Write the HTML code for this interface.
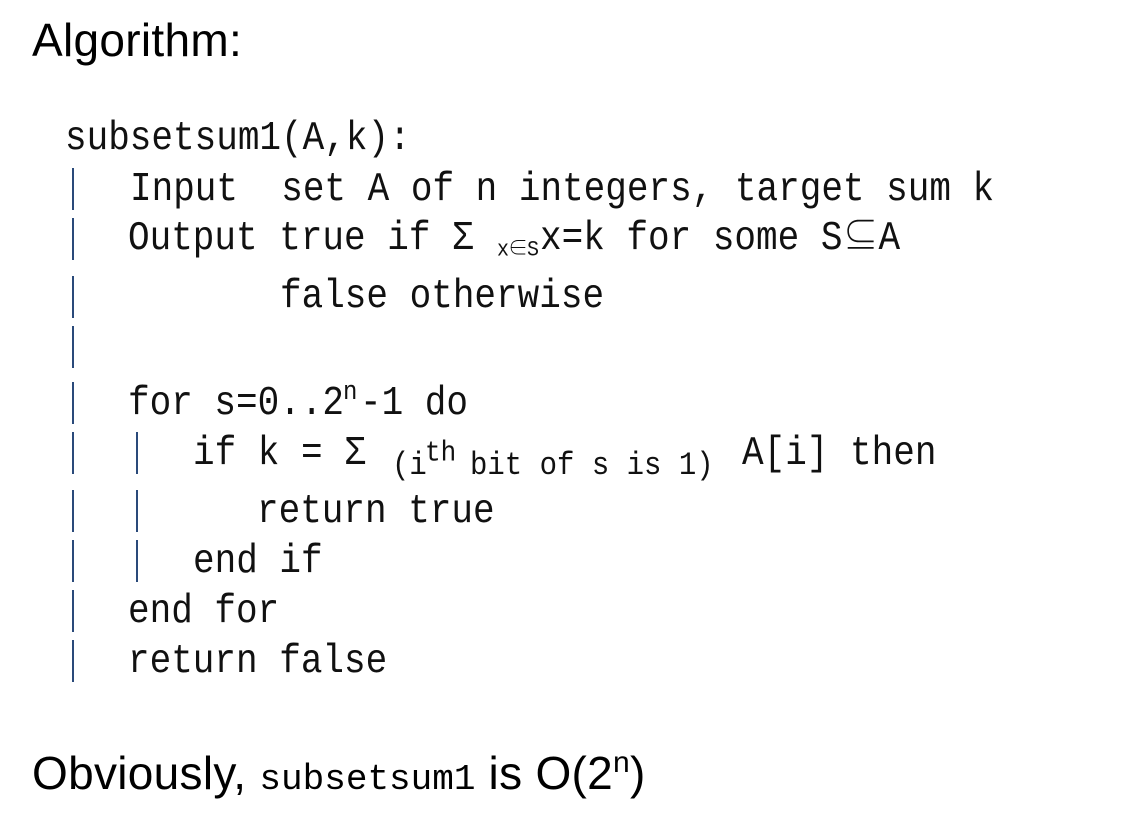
<!DOCTYPE html>
<html><head><meta charset="utf-8"><style>
html,body{margin:0;padding:0;background:#fff;width:1122px;height:813px;overflow:hidden;position:relative}
.s{position:absolute;font-family:"Liberation Sans",sans-serif;font-size:46px;color:#000;line-height:1;white-space:pre;letter-spacing:0.3px}
.m{position:absolute;font-family:"Liberation Mono","Noto Serif CJK SC",monospace;font-size:36px;color:#111;line-height:1;white-space:pre;transform:scaleY(1.12);transform-origin:0 100%}
.b{position:absolute;width:2px;background:#2a4a7a}
</style></head><body>
<div class="s" style="left:32px;top:17px">Algorithm:</div>

<div class="m" style="left:65px;top:123px">subsetsum1(A,k):</div>
<div class="m" style="left:130px;top:174px">Input  set A of n integers, target sum k</div>
<div class="m" style="left:128px;top:223px">Output true if Σ</div>
<div class="m" style="left:497px;top:242px;font-size:20px;letter-spacing:-1px">x∈S</div>
<div class="m" style="left:540px;top:223px">x=k for some S⊆A</div>
<div class="m" style="left:280px;top:281px">false otherwise</div>
<div class="m" style="left:128px;top:388px">for s=0..2</div>
<div class="m" style="left:343px;top:383px;font-size:24px">n</div>
<div class="m" style="left:360px;top:388px">-1 do</div>
<div class="m" style="left:193px;top:438px">if k = Σ</div>
<div class="m" style="left:392px;top:453px;font-size:29px">(i</div>
<div class="m" style="left:425px;top:441px;font-size:26px">th</div>
<div class="m" style="left:470px;top:453px;font-size:29px">bit of s is 1)</div>
<div class="m" style="left:742px;top:438px">A[i] then</div>
<div class="m" style="left:257px;top:496px">return true</div>
<div class="m" style="left:193px;top:546px">end if</div>
<div class="m" style="left:128px;top:596px">end for</div>
<div class="m" style="left:128px;top:646px">return false</div>

<div class="b" style="left:72px;top:168px;height:42px"></div>
<div class="b" style="left:72px;top:218px;height:42px"></div>
<div class="b" style="left:72px;top:276px;height:42px"></div>
<div class="b" style="left:72px;top:326px;height:42px"></div>
<div class="b" style="left:72px;top:382px;height:42px"></div>
<div class="b" style="left:72px;top:432px;height:42px"></div>
<div class="b" style="left:72px;top:490px;height:42px"></div>
<div class="b" style="left:72px;top:540px;height:42px"></div>
<div class="b" style="left:72px;top:590px;height:42px"></div>
<div class="b" style="left:72px;top:640px;height:42px"></div>
<div class="b" style="left:136px;top:432px;height:42px"></div>
<div class="b" style="left:136px;top:490px;height:42px"></div>
<div class="b" style="left:136px;top:540px;height:42px"></div>

<div class="s" style="left:32px;top:748px">Obviously, <span style="font-family:'Liberation Mono',monospace;font-size:36px;letter-spacing:0">subsetsum1</span> is O(2<sup style="font-size:30px;vertical-align:17px">n</sup>)</div>
</body></html>
